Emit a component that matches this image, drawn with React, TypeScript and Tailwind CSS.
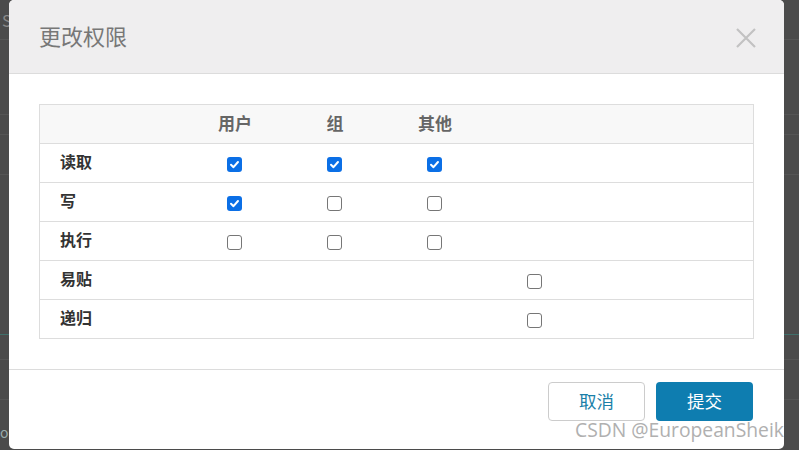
import React from "react";

const cjk = { fontFamily: '"Noto Sans CJK SC", "Noto Sans", sans-serif' };

function Box({ checked }: { checked: boolean }) {
  if (checked) {
    return (
      <span className="flex h-[15px] w-[15px] items-center justify-center rounded-[3px] bg-[#0b6fe6]">
        <svg width="11" height="11" viewBox="0 0 12 12">
          <path d="M2.2 6.3 L4.9 8.9 L9.8 3.3" fill="none" stroke="#fff" strokeWidth="2.2" strokeLinecap="round" strokeLinejoin="round" />
        </svg>
      </span>
    );
  }
  return <span className="block h-[15px] w-[15px] rounded-[3px] border border-[#767676] bg-white" />;
}

const rows: { label: string; cells: (boolean | null)[]; extra?: boolean }[] = [
  { label: "读取", cells: [true, true, true] },
  { label: "写", cells: [true, false, false] },
  { label: "执行", cells: [false, false, false] },
  { label: "易贴", cells: [null, null, null], extra: true },
  { label: "递归", cells: [null, null, null], extra: true },
];

export default function App() {
  return (
    <div className="relative h-[450px] w-[799px] overflow-hidden bg-[#4b4b4b]" style={cjk}>
      {/* background page (dimmed) */}
      <div className="flex h-full flex-col">
        <div className="h-[40px] border-b border-[#565656] pl-[2px] pt-[10px] text-[16px] leading-[20px] text-[#8a8a8a]">S</div>
        <div className="h-[75px] border-b border-[#555]" />
        <div className="h-[20px] border-b border-[#555]" />
        <div className="h-[40px] border-b border-[#555]" />
        <div className="h-[160px] border-b border-[#3f6f6a]" />
        <div className="h-[25px] border-b border-[#555]" />
        <div className="h-[40px] border-b border-[#555]" />
        <div className="pt-[22px] text-[14px] text-[#9aa]">ol</div>
      </div>

      {/* modal */}
      <div className="absolute left-[9px] top-0 flex h-[449px] w-[775px] flex-col overflow-hidden rounded-[5px] bg-white">
        <div className="flex h-[74px] items-center justify-between border-b border-[#dcdcdc] bg-[#efeeef] pl-[30px] pr-[27px]">
          <span className="pb-[4px] text-[22px] leading-[28px] text-[#777]">更改权限</span>
          <svg width="22" height="22" viewBox="0 0 22 22" className="mt-[2px]">
            <path d="M2 2 L20 20 M20 2 L2 20" stroke="#c2c2c2" strokeWidth="2.2" />
          </svg>
        </div>

        <div className="px-[30px] pb-[30px] pt-[30px]">
          <div className="border border-[#dddddd]">
            <div className="grid h-[39px] grid-cols-[145px_100px_100px_100px_1fr] items-center border-b border-[#dddddd] bg-[#f8f8f8] text-[17px] font-bold text-[#666]">
              <span />
              <span className="pb-[2px] text-center">用户</span>
              <span className="pb-[2px] text-center">组</span>
              <span className="pb-[2px] text-center">其他</span>
              <span />
            </div>
            {rows.map((r, i) => (
              <div
                key={r.label}
                className={
                  i < rows.length - 1
                    ? "grid h-[39px] grid-cols-[145px_100px_100px_100px_100px_1fr] items-center border-b border-[#dddddd]"
                    : "grid h-[38px] grid-cols-[145px_100px_100px_100px_100px_1fr] items-center"
                }
              >
                <span className="pb-[4px] pl-[20px] text-[16px] font-semibold text-[#333]">{r.label}</span>
                {r.cells.map((c, j) => (
                  <span key={j} className="flex justify-center pt-[3px] pr-[1px]">
                    {c === null ? null : <Box checked={c} />}
                  </span>
                ))}
                <span className="flex justify-center pt-[3px] pr-[2px]">{r.extra ? <Box checked={false} /> : null}</span>
                <span />
              </div>
            ))}
          </div>
        </div>

        <div className="flex justify-end gap-[11px] border-t border-[#dcdcdc] pr-[31px] pt-[12px]">
          <button className="h-[39px] w-[97px] rounded-[4px] border border-[#cccccc] bg-white text-[17.5px] text-[#1a7fa8]">取消</button>
          <button className="h-[39px] w-[97px] rounded-[4px] bg-[#0e7db0] text-[17.5px] text-white">提交</button>
        </div>
      </div>

      {/* watermark */}
      <div
        className="absolute left-[575px] top-[417px] whitespace-nowrap text-[19.3px] leading-[26px] text-[#b0b0b0]"
        style={{ fontFamily: '"Open Sans", "Noto Sans", sans-serif' }}
      >
        CSDN @EuropeanSheik
      </div>
    </div>
  );
}
